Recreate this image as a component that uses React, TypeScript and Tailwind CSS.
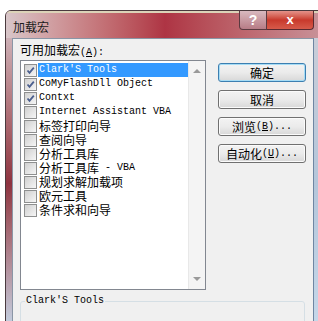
import React from "react";

const cjk = '"Noto Sans CJK SC", "Noto Sans CJK JP", sans-serif';
const mono = '"Liberation Mono", "Noto Sans CJK SC", monospace';

// split a label into CJK runs (12px) and half-width runs (10px mono)
const Label = ({ text }: { text: string }) => {
  const parts = text.split(/([\u4e00-\u9fff]+)/).filter((p) => p !== "");
  return (
    <>
      {parts.map((p, i) =>
        /[\u4e00-\u9fff]/.test(p) ? (
          <span key={i} className="inline-block h-[14px] text-[12px] leading-[14px]" style={{ fontFamily: cjk }}>
            {p}
          </span>
        ) : (
          <span key={i} className="inline-block h-[14px] text-[10px] leading-[14px] whitespace-pre" style={{ fontFamily: mono }}>
            {p}
          </span>
        )
      )}
    </>
  );
};

const items = [
  { name: "Clark'S Tools", on: true },
  { name: "CoMyFlashDll Object", on: true },
  { name: "Contxt", on: true },
  { name: "Internet Assistant VBA", on: false },
  { name: "标签打印向导", on: false },
  { name: "查阅向导", on: false },
  { name: "分析工具库", on: false },
  { name: "分析工具库 - VBA", on: false },
  { name: "规划求解加载项", on: false },
  { name: "欧元工具", on: false },
  { name: "条件求和向导", on: false },
];

const Check = ({ on }: { on: boolean }) => (
  <div className="w-[13px] h-[13px] shrink-0 border border-[#8e8f8f] bg-gradient-to-br from-[#d0d0d0] to-[#f6f6f6] p-[1px]">
    {on && (
      <svg width="9" height="9" viewBox="0 0 9 9">
        <path d="M1.5 4.5 L3.5 6.8 L7.8 1.6" fill="none" stroke="#4b5f8e" strokeWidth="1.8" />
      </svg>
    )}
  </div>
);

const Btn = ({ children, main }: { children: React.ReactNode; main?: boolean }) => (
  <div
    className={
      "w-[88px] h-[19px] rounded-[3px] border flex items-center justify-center text-black bg-gradient-to-b from-[#f3f3f3] via-[#ebebeb] to-[#d8d8d8] " +
      (main ? "border-[#3c7fb1] shadow-[inset_0_0_0_1px_#a6dcf5]" : "border-[#707070] shadow-[inset_0_0_0_1px_#fbfbfb]")
    }
  >
    {children}
  </div>
);

export default function App() {
  return (
    <div className="w-[318px] h-[321px] overflow-hidden bg-white">
      <div className="ml-[5px] mt-[10px] w-[320px] h-[320px] rounded-tl-[6px] border border-[#4a3a3e] flex flex-col overflow-hidden bg-gradient-to-b from-[#cfa9b0] via-[#c3cad6] to-[#bccfe2]">
        {/* title bar */}
        <div className="h-[27px] shrink-0 flex bg-gradient-to-r from-[#d8c6c9] via-[#ae3444] to-[#c8939a] shadow-[inset_0_2px_0_#dcd3b8]">
          <div className="flex-1 pl-[7px] pt-[8px] text-[12px] leading-[16px] text-[#1a1a1a]" style={{ fontFamily: cjk }}>
            加载宏
          </div>
          <div className="w-[28px] h-[19px] border border-t-0 border-[#5a3a40] rounded-bl-[4px] bg-gradient-to-b from-[#d9b9bf] to-[#b77c86] flex items-center justify-center text-white font-bold text-[14px]" style={{ fontFamily: '"Liberation Sans", sans-serif' }}>
            ?
          </div>
          <div className="w-[47px] h-[19px] border border-t-0 border-l-0 border-[#5a2a30] rounded-br-[4px] bg-gradient-to-b from-[#e4928a] via-[#c8392c] to-[#d65a4a] flex items-center justify-center text-white font-bold text-[13px]" style={{ fontFamily: '"Liberation Sans", sans-serif' }}>
            x
          </div>
          <div className="w-[10px]" />
        </div>
        <div className="flex flex-1 min-h-0 overflow-hidden">
          {/* left frame */}
          <div className="w-[6px] bg-gradient-to-b from-[#cdb0b6] via-[#8e3340] to-[#c4d4e6]" />
          {/* client */}
          <div className="w-[301px] bg-[#f0f0f0] border-l border-t border-[#8a96a6] pl-[7px]">
            <div className="h-[21px] pt-[3px] text-[12px] leading-[16px] text-black" style={{ fontFamily: cjk }}>
              可用加载宏
              <span className="text-[10px]" style={{ fontFamily: mono }}>
                (<u>A</u>):
              </span>
            </div>
            <div className="flex">
              <div className="w-[186px] h-[230px] border border-[#828790] bg-white flex">
                <div className="flex-1 pt-[2px]">
                  {items.map((it, i) => (
                    <div key={i} className="h-[14px] flex items-center pl-[3px]">
                      <Check on={it.on} />
                      <div className={"ml-[1px] pl-[1px] pr-[2px] h-[14px] flex items-center " + (i === 0 ? "flex-1 bg-[#3399ff] text-white" : "text-black")}>
                        <Label text={it.name} />
                      </div>
                    </div>
                  ))}
                </div>
                <div className="w-[17px] bg-[#f4f4f4] border-l border-[#e8e8e8] flex flex-col justify-between">
                  <div className="h-[20px] flex items-center justify-center">
                    <div className="w-0 h-0 border-l-[4px] border-r-[4px] border-b-[4px] border-l-transparent border-r-transparent border-b-[#9a9a9a]" />
                  </div>
                  <div className="h-[20px] flex items-center justify-center">
                    <div className="w-0 h-0 border-l-[4px] border-r-[4px] border-t-[4px] border-l-transparent border-r-transparent border-t-[#9a9a9a]" />
                  </div>
                </div>
              </div>
              <div className="ml-[12px] mt-[3px] flex flex-col gap-[8px]">
                <Btn main>
                  <Label text="确定" />
                </Btn>
                <Btn>
                  <Label text="取消" />
                </Btn>
                <Btn>
                  <span className="text-[12px]" style={{ fontFamily: cjk }}>浏览</span>
                  <span className="text-[10px]" style={{ fontFamily: mono }}>
                    (<u>B</u>)...
                  </span>
                </Btn>
                <Btn>
                  <span className="text-[12px]" style={{ fontFamily: cjk }}>自动化</span>
                  <span className="text-[10px]" style={{ fontFamily: mono }}>
                    (<u>U</u>)...
                  </span>
                </Btn>
              </div>
            </div>
            <fieldset className="mt-[4px] w-[285px] h-[60px] border border-[#d5dfe5] rounded-[3px] px-[4px]">
              <legend className="text-[10px] leading-[14px] text-black px-[1px]" style={{ fontFamily: mono }}>
                Clark'S Tools
              </legend>
            </fieldset>
          </div>
          {/* right frame */}
          <div className="flex-1 bg-gradient-to-b from-[#c9cdd8] via-[#b4c6da] to-[#c6d8ea] border-l border-[#6f86a2]" />
        </div>
      </div>
    </div>
  );
}
